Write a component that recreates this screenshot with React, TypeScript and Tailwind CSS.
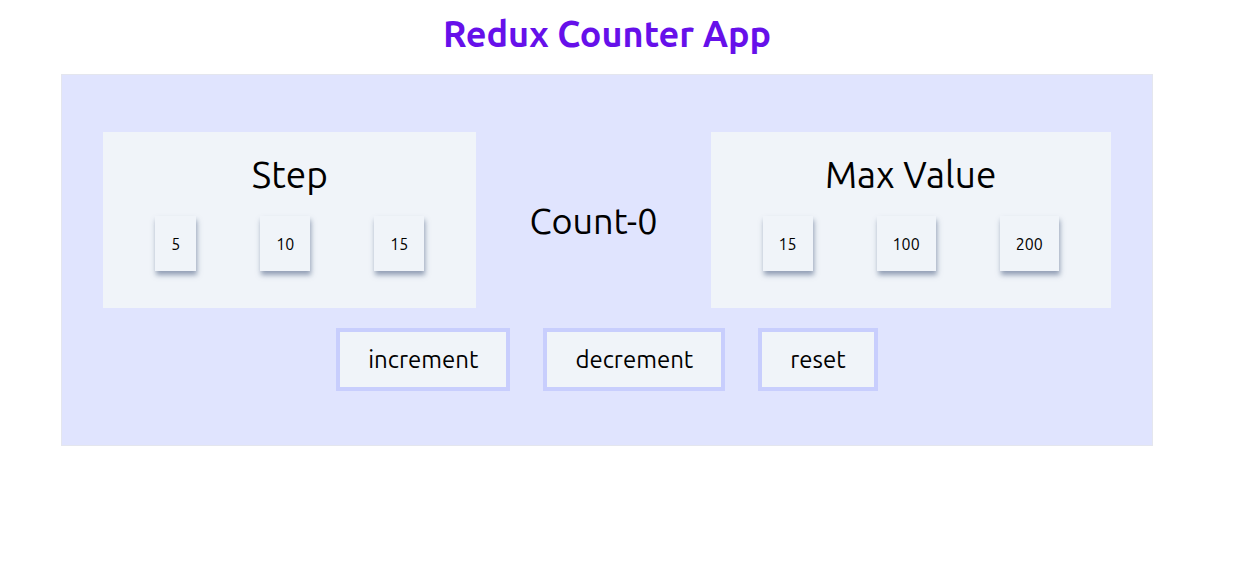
import React from "react";

const stepValues = [5, 10, 15];
const maxValues = [15, 100, 200];

function ValueBox({ title, values }: { title: string; values: number[] }) {
  return (
    <div className="bg-[#f0f4f9] pt-[21px] pb-[37px] px-[20px] flex flex-col items-center">
      <h2 className="text-[37px] leading-[43px] text-black font-normal mb-[20px]">{title}</h2>
      <div className="flex">
        {values.map((v) => (
          <button
            key={v}
            className="mx-[32px] h-[55px] px-[16px] bg-[#f0f4f9] text-[16px] text-black shadow-[1px_4px_5px_rgba(70,90,125,0.55)]"
          >
            {v}
          </button>
        ))}
      </div>
    </div>
  );
}

export default function App() {
  return (
    <div className="w-[1260px] min-h-[584px] bg-white font-['Ubuntu','Open_Sans',sans-serif]">
      <div className="ml-[61px] w-[1092px] pt-[12px]">
        <h1 className="text-[36px] leading-[43px] font-bold text-center text-[#6610ea] mb-[19px]">
          Redux Counter App
        </h1>
        <div className="border border-[#e4e6ee] bg-[#e0e4fe] pt-[57px] pb-[54px]">
          <div className="flex items-center justify-center gap-[53px]">
            <ValueBox title="Step" values={stepValues} />
            <div className="text-[36px] leading-[43px] text-black">Count-0</div>
            <ValueBox title="Max Value" values={maxValues} />
          </div>
          <div className="mt-[20px] flex justify-center gap-[33px]">
            {["increment", "decrement", "reset"].map((b) => (
              <button
                key={b}
                className="h-[63px] px-[28px] border-4 border-[#c8cefd] bg-[#f0f4f9] text-[24px] text-black"
              >
                {b}
              </button>
            ))}
          </div>
        </div>
      </div>
    </div>
  );
}
